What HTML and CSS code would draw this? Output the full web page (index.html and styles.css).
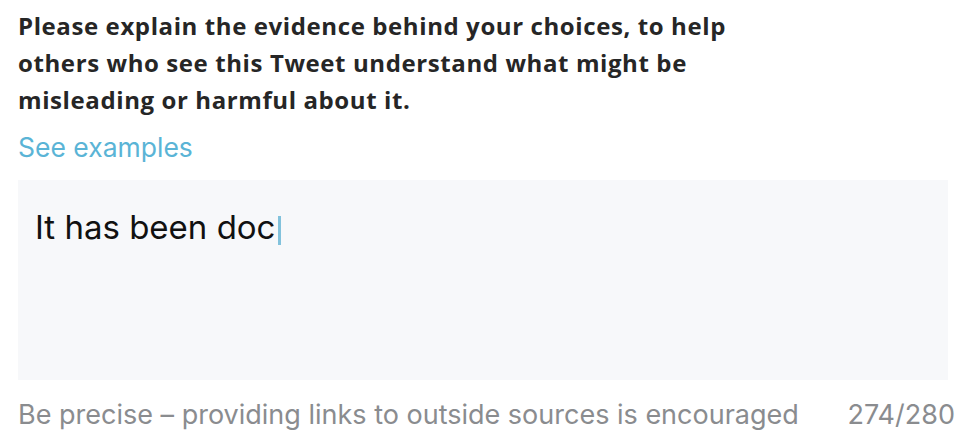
FILE: index.html
```html
<!DOCTYPE html>
<html lang="en">
<head>
    <meta charset="UTF-8">
    <meta name="viewport" content="width=device-width, initial-scale=1.0">
    <title>Add a note</title>
    <link rel="stylesheet" href="styles.css">
</head>
<body>
    <div class="nota">
        <p class="pregunta">Please explain the evidence behind your choices, to help others who see this Tweet understand what might be misleading or harmful about it.</p>
        <a class="ejemplos" href="#">See examples</a>

        <div class="caja">
            <span class="texto">It has been doc</span><span class="cursor"></span>
        </div>

        <div class="pie">
            <span>Be precise – providing links to outside sources is encouraged</span>
            <span class="contador">274/280</span>
        </div>
    </div>
</body>
</html>
```

FILE: styles.css
```css
body {
    margin: 0;
    background: #fff;
    font-family: Inter, "Noto Sans", sans-serif;
}
.nota {
    padding: 7px 14px 0 18px;
}
.pregunta {
    margin: 0;
    width: 750px;
    font-family: "Open Sans", sans-serif;
    font-size: 24px;
    font-weight: 700;
    letter-spacing: 0.6px;
    line-height: 37px;
    color: #262626;
}
.ejemplos {
    display: block;
    margin-top: 13px;
    font-size: 26.5px;
    line-height: 32px;
    color: #5ab4d6;
    text-decoration: none;
}
.caja {
    margin-top: 17px;
    width: 930px;
    height: 200px;
    box-sizing: border-box;
    padding: 27px 17px;
    background: #f7f8fa;
}
.texto {
    font-size: 33px;
    line-height: 40px;
    color: #111;
}
.cursor {
    display: inline-block;
    width: 3px;
    height: 29px;
    margin-left: 3px;
    vertical-align: -6px;
    background: #82c2dc;
}
.pie {
    display: flex;
    justify-content: space-between;
    width: 937px;
    margin-top: 19px;
    font-size: 27px;
    line-height: 32px;
    color: #8a8c8f;
}
```
